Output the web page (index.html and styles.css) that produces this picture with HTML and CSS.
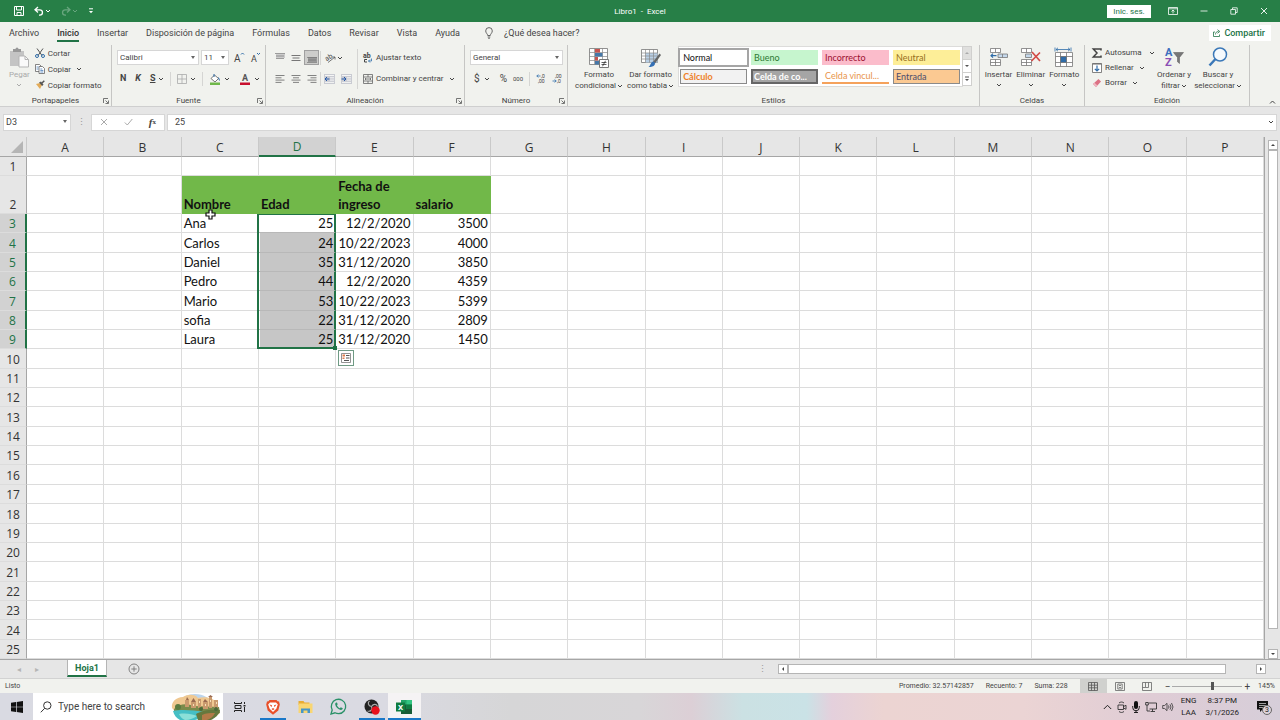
FILE: index.html
```html
<!DOCTYPE html>
<html lang="es">
<head>
  <meta charset="UTF-8">
  <meta name="viewport" content="width=device-width, initial-scale=1.0">
  <title>Libro1 - Excel</title>
  <link rel="stylesheet" href="styles.css">
</head>
<body>
  <!-- Shared icons -->
  <svg class="defs" width="0" height="0">
    <symbol id="chev" viewBox="0 0 6 6"><path d="M1 2l2 2 2-2" fill="none" stroke="currentColor" stroke-width="1"/></symbol>
    <symbol id="launcher" viewBox="0 0 6 6"><path d="M.5 5V.5H5M2.500 2.500L5 5M5.500 2.500v3h-3" fill="none" stroke="#555" stroke-width=".8"/></symbol>
  </svg>

  <header class="title-bar">
    <div class="quick-access">
      <button aria-label="Guardar"><svg width="10" height="10" viewBox="0 0 10 10" fill="none" stroke="#fff"><path d="M.5.5h9v9h-9z"/><path d="M2.500.5v3.500h5V.5M3 9.500V6.500h4v3" /></svg></button>
      <button aria-label="Deshacer" class="undo"><svg width="10" height="10" viewBox="0 0 10 10" fill="none" stroke="#fff" stroke-width="1.300"><path d="M4 1L1 3.800l3 2.700M1.300 3.800h4.500a2.600 2.600 0 010 5.300H5"/></svg><svg class="chev"><use href="#chev"/></svg></button>
      <button aria-label="Rehacer" class="redo"><svg width="10" height="10" viewBox="0 0 10 10" fill="none" stroke="#fff" stroke-width="1.300"><path d="M6 1l3 2.800-3 2.700M8.700 3.800H4.200a2.600 2.600 0 000 5.300H5"/></svg><svg class="chev"><use href="#chev"/></svg></button>
      <button aria-label="Personalizar"><svg width="6" height="6" viewBox="0 0 6 6"><path d="M1 .8h4" stroke="#fff"/><path d="M1 3h4L3 5.200z" fill="#fff"/></svg></button>
    </div>
    <div class="title">Libro1&nbsp; -&nbsp; Excel</div>
    <div class="window-controls">
      <button class="sign-in">Inic. ses.</button>
      <button aria-label="Cinta"><svg width="10" height="8" viewBox="0 0 10 8" fill="none" stroke="#fff" stroke-width=".8"><path d="M.5.5h9v7h-9zM.5 1.800h9M5 6.500V3M3.500 4.500L5 3l1.500 1.500"/></svg></button>
      <button aria-label="Minimizar"><svg width="8" height="8" viewBox="0 0 8 8" stroke="#fff" stroke-width=".8"><path d="M.5 4h7"/></svg></button>
      <button aria-label="Restaurar"><svg width="8" height="8" viewBox="0 0 8 8" fill="none" stroke="#fff" stroke-width=".8"><path d="M.8 2.500h4.700v4.700H.8zM2.500 2.500V.8h4.700v4.700H5.500"/></svg></button>
      <button aria-label="Cerrar"><svg width="8" height="8" viewBox="0 0 8 8" stroke="#fff" stroke-width=".9"><path d="M1 1l6 6M7 1L1 7"/></svg></button>
    </div>
  </header>

  <nav class="tabs">
    <a href="#">Archivo</a>
    <a href="#" class="active">Inicio</a>
    <a href="#">Insertar</a>
    <a href="#">Disposición de página</a>
    <a href="#">Fórmulas</a>
    <a href="#">Datos</a>
    <a href="#">Revisar</a>
    <a href="#">Vista</a>
    <a href="#">Ayuda</a>
    <a href="#" class="tell-me"><svg width="8" height="12" viewBox="0 0 8 12" fill="none" stroke="#555" stroke-width=".9"><path d="M2.700 8.500C2.700 7 .7 6 .7 3.900a3.300 3.300 0 016.600 0C7.300 6 5.300 7 5.300 8.500zM2.700 10h2.600M3.200 11.300h1.600"/></svg>¿Qué desea hacer?</a>
    <button class="share"><svg width="8" height="8" viewBox="0 0 8 8" fill="none" stroke="#217346" stroke-width=".8"><path d="M2 3H.5v4.500h6V5.500M2.500 5.500c0-2 1-3 3-3M4.500.7l2.300 1.800-2.300 1.800"/></svg>Compartir</button>
  </nav>

  <section class="ribbon">
    <div class="group clipboard">
      <div class="group-body">
        <button class="big disabled">
          <svg width="20" height="22" viewBox="0 0 20 22"><path d="M1 4h14v15H1z" fill="#c4c4c4"/><path d="M4 4V2h2.500a1.500 1.500 0 013 0H12v3H4z" fill="#989898"/><path d="M10 9h6l3.500 3.500V20H10z" fill="#fafafa" stroke="#b5b5b5"/><path d="M16 9v3.500h3.500" fill="none" stroke="#b5b5b5"/></svg>
          <span>Pegar</span><svg class="chev"><use href="#chev"/></svg>
        </button>
        <div class="stack">
          <button class="small"><svg width="10" height="10" viewBox="0 0 10 10" fill="none"><path d="M2 .5l5 7M8 .5l-5 7" stroke="#555"/><circle cx="2" cy="8" r="1.500" stroke="#2f6ca8"/><circle cx="8" cy="8" r="1.500" stroke="#2f6ca8"/></svg>Cortar</button>
          <button class="small"><svg width="10" height="10" viewBox="0 0 10 10" fill="#fff" stroke="#666" stroke-width=".8"><path d="M.5.5h4l1.500 1.500v5.500H.5z"/><path d="M4 2.500h3.500l2 2v5H4z"/><path d="M5.300 5h2M5.300 6.500h3M5.300 8h3M1.500 3h2M1.500 5h2" stroke="#4a7ebb"/></svg>Copiar<svg class="chev"><use href="#chev"/></svg></button>
          <button class="small"><svg width="10" height="10" viewBox="0 0 10 10"><path d="M1 4l4-1 2 2-2 4z" fill="#e3ab58"/><path d="M4 2.500l2-1 2.500 3-1.300 1.600z" fill="#555"/><path d="M7 3l2.300-2.300" stroke="#555" stroke-width="1.500"/></svg>Copiar formato</button>
        </div>
      </div>
      <div class="group-label">Portapapeles</div>
      <svg class="launcher"><use href="#launcher"/></svg>
    </div>

    <div class="group font">
      <div class="group-body rows">
        <div class="row">
          <div class="combo font-name"><select aria-label="Fuente"><option>Calibri</option></select></div>
          <div class="combo font-size"><select aria-label="Tamaño"><option>11</option></select></div>
          <button aria-label="Aumentar"><svg width="11" height="11" viewBox="0 0 11 11"><text x="0" y="10" font-size="10" fill="#444">A</text><path d="M7 2.500L8.500 1 10 2.500" fill="none" stroke="#2f6ca8"/></svg></button>
          <button aria-label="Disminuir"><svg width="11" height="11" viewBox="0 0 11 11"><text x="1" y="10" font-size="9" fill="#444">A</text><path d="M7 1l1.500 1.500L10 1" fill="none" stroke="#2f6ca8"/></svg></button>
        </div>
        <div class="row styles">
          <button><b>N</b></button>
          <button><b><i>K</i></b></button>
          <button><b><u>S</u></b><svg class="chev"><use href="#chev"/></svg></button>
          <span class="rule"></span>
          <button aria-label="Bordes"><svg width="10" height="10" viewBox="0 0 10 10" fill="none" stroke="#aaa" stroke-width=".8"><path d="M.5.5h9v9h-9zM5 .5v9M.5 5h9"/></svg><svg class="chev"><use href="#chev"/></svg></button>
          <span class="rule"></span>
          <button aria-label="Relleno"><svg width="12" height="12" viewBox="0 0 12 12"><path d="M2 5.500L5.500 2l4 3.500L6 9z" fill="#fff" stroke="#555" stroke-width=".8"/><path d="M5 1v3M9.500 4.500l1 3" stroke="#2f6ca8" fill="none"/><path d="M1 9.500h10V12H1z" fill="#70b84a"/></svg><svg class="chev"><use href="#chev"/></svg></button>
          <button aria-label="Color de fuente"><svg width="12" height="12" viewBox="0 0 12 12"><text x="3" y="8" font-size="9" font-weight="bold" fill="#555">A</text><path d="M1 9.500h10V12H1z" fill="#c8102e"/></svg><svg class="chev"><use href="#chev"/></svg></button>
        </div>
      </div>
      <div class="group-label">Fuente</div>
      <svg class="launcher"><use href="#launcher"/></svg>
    </div>

    <div class="group align">
      <div class="group-body">
        <div class="rows">
          <div class="row">
            <button aria-label="Superior"><svg width="10" height="10" viewBox="0 0 10 10"><path d="M1 1h9v4H1z" fill="#ccc"/><path d="M0 .5h10M1 3h8M1 5.500h8" stroke="#777" stroke-width=".7"/></svg></button>
            <button aria-label="Medio"><svg width="10" height="10" viewBox="0 0 10 10" stroke="#777"><path d="M.5 2.500h9M1.500 5h7M.5 7.500h9"/></svg></button>
            <button aria-label="Inferior" class="on"><svg width="10" height="10" viewBox="0 0 10 10"><path d="M1 4h9v5H1z" fill="#999"/><path d="M0 4.500h10M1 7h8M0 9.500h10" stroke="#777" stroke-width=".7"/></svg></button>
            <span class="rule"></span>
            <button aria-label="Orientación"><svg width="12" height="12" viewBox="0 0 12 12"><text x="0" y="8" font-size="7" fill="#444" transform="rotate(-30 3 6)">ab</text><path d="M3 10.500L10 5M7.500 5H10v2.500" stroke="#555" fill="none" stroke-width=".8"/></svg><svg class="chev"><use href="#chev"/></svg></button>
          </div>
          <div class="row">
            <button aria-label="Izquierda"><svg width="10" height="10" viewBox="0 0 10 10" stroke="#666" stroke-width=".8"><path d="M.5 1.500h9M.5 3.800h6M.5 6.100h9M.5 8.400h6"/></svg></button>
            <button aria-label="Centro"><svg width="10" height="10" viewBox="0 0 10 10" stroke="#666" stroke-width=".8"><path d="M.5 1.500h9M2 3.800h6M.5 6.100h9M2 8.400h6"/></svg></button>
            <button aria-label="Derecha"><svg width="10" height="10" viewBox="0 0 10 10" stroke="#666" stroke-width=".8"><path d="M.5 1.500h9M3.500 3.800h6M.5 6.100h9M3.500 8.400h6"/></svg></button>
            <span class="rule"></span>
            <button aria-label="Menos sangría"><svg width="11" height="10" viewBox="0 0 11 10"><path d="M0 0h11v10H0z" fill="#c9cbd2"/><path d="M1 1.500h9M6 3.800h4M6 6.100h4M1 8.400h9" stroke="#f5f5f5"/><path d="M5.500 5H1.500M3 3L1 5l2 2" stroke="#2458a8" fill="none"/></svg></button>
            <button aria-label="Más sangría"><svg width="11" height="10" viewBox="0 0 11 10"><path d="M0 0h11v10H0z" fill="#c9cbd2"/><path d="M1 1.500h9M6 3.800h4M6 6.100h4M1 8.400h9" stroke="#f5f5f5"/><path d="M.5 5h4M3 3l2 2-2 2" stroke="#2458a8" fill="none"/></svg></button>
          </div>
        </div>
        <span class="rule tall"></span>
        <div class="rows">
          <button class="small"><svg width="10" height="11" viewBox="0 0 10 11"><text x="0" y="6" font-size="7" font-weight="bold" fill="#444">ab</text><path d="M4 7.500H1.500V10H4" stroke="#444" fill="none"/><path d="M8.500 6.500v2.500H5.500M7 7.500L5.500 9 7 10.500" stroke="#2f6ca8" fill="none" stroke-width=".8"/></svg>Ajustar texto</button>
          <button class="small"><svg width="10" height="10" viewBox="0 0 10 10" fill="none" stroke="#666" stroke-width=".8"><path d="M.5.5h9v9h-9zM.5 3h9M.5 7h9M5 .5V3M5 7v2.500"/><path d="M2 5h6M3 4L2 5l1 1M7 4l1 1-1 1"/></svg>Combinar y centrar<svg class="chev"><use href="#chev"/></svg></button>
        </div>
      </div>
      <div class="group-label">Alineación</div>
      <svg class="launcher"><use href="#launcher"/></svg>
    </div>

    <div class="group number">
      <div class="group-body rows">
        <div class="row"><div class="combo number-format"><select aria-label="Formato de número"><option>General</option></select></div></div>
        <div class="row">
          <button class="sign">$<svg class="chev"><use href="#chev"/></svg></button>
          <button class="sign">%</button>
          <button class="zeros">000</button>
          <span class="rule"></span>
          <button aria-label="Aumentar decimales"><svg width="10" height="11" viewBox="0 0 10 11"><text x="5" y="5" font-size="5" fill="#444">,0</text><text x="2" y="10" font-size="5" fill="#444">,00</text><path d="M4.500 3H.8M2.300 1.500L.8 3l1.500 1.500" stroke="#2f6ca8" fill="none" stroke-width=".8"/></svg></button>
          <button aria-label="Disminuir decimales"><svg width="10" height="11" viewBox="0 0 10 11"><text x="3" y="5" font-size="5" fill="#444">,00</text><text x="5" y="10" font-size="5" fill="#444">,0</text><path d="M.5 8h3.700M2.700 6.500L4.200 8 2.700 9.500" stroke="#2f6ca8" fill="none" stroke-width=".8"/></svg></button>
        </div>
      </div>
      <div class="group-label">Número</div>
      <svg class="launcher"><use href="#launcher"/></svg>
    </div>

    <div class="group cell-styles">
      <div class="group-body">
        <button class="big">
          <svg width="20" height="22" viewBox="0 0 20 22"><path d="M.5 1.500h18v16H.5z" fill="#fff" stroke="#777" stroke-width=".8"/><path d="M.5 5.500h18M.5 9.500h18M.5 13.500h18M5.500 1.500v16M13.500 1.500v16" stroke="#888" stroke-width=".7"/><path d="M6 2h5v3.500H6zM6 10h3v3.500H6z" fill="#c75450"/><path d="M6 6h7.500v3.500H6zM6 14h5v3.500H6z" fill="#4678a8"/><path d="M10.500 12.500h9v8h-9z" fill="#fff" stroke="#777"/><path d="M12.500 15.500h5M12.500 17.500h5M16.500 13.800l-3 5.500" stroke="#333" stroke-width=".8"/></svg>
          <span>Formato</span><span>condicional<svg class="chev"><use href="#chev"/></svg></span>
        </button>
        <button class="big">
          <svg width="20" height="22" viewBox="0 0 20 22"><path d="M.5 2.500h16v13H.5z" fill="#fff" stroke="#777" stroke-width=".8"/><path d="M4.500 6h12v9.500h-12z" fill="#b9d0e6"/><path d="M.5 6h16M.5 9h16M.5 12h16M4.500 2.500v13M8.500 2.500v13M12.500 2.500v13" stroke="#888" stroke-width=".7"/><path d="M18.500 6.500L12 15l2 1.500L20 8z" fill="#666"/><path d="M12 14.500c2 .5 2.500 2 1.500 3.500s-3 2-6 2c2-1 1.500-4 4.500-5.500z" fill="#3470b5"/></svg>
          <span>Dar formato</span><span>como tabla<svg class="chev"><use href="#chev"/></svg></span>
        </button>
        <div class="gallery">
          <button class="normal">Normal</button>
          <button class="good">Bueno</button>
          <button class="bad">Incorrecto</button>
          <button class="neutral">Neutral</button>
          <button class="calc">Cálculo</button>
          <button class="check">Celda de co...</button>
          <button class="linked">Celda vincul...</button>
          <button class="input">Entrada</button>
        </div>
        <div class="gallery-scroll">
          <button class="off" aria-label="Arriba"><svg width="6" height="6" viewBox="0 0 6 6"><path d="M1 4h4L3 2z" fill="#aaa"/></svg></button>
          <button aria-label="Abajo"><svg width="6" height="6" viewBox="0 0 6 6"><path d="M1 2h4L3 4z" fill="#555"/></svg></button>
          <button aria-label="Más"><svg width="6" height="6" viewBox="0 0 6 6"><path d="M1 1h4" stroke="#555"/><path d="M1 3h4L3 5z" fill="#555"/></svg></button>
        </div>
      </div>
      <div class="group-label">Estilos</div>
    </div>

    <div class="group cells">
      <div class="group-body">
        <button class="big">
          <svg width="20" height="22" viewBox="0 0 20 22" fill="#fff" stroke="#777" stroke-width=".8"><path d="M1.500 1.500h10v4h-10zM6.500 1.500v4M1.500 12.500h10v6h-10zM6.500 12.500v6M1.500 15.500h10"/><path d="M9 7h9.500v3.500H9zM13.500 7v3.500" fill="#c5d9ec"/><path d="M7.500 8.700H2M4 6.700l-2 2 2 2" stroke="#2f6ca8" stroke-width="1.200" fill="none"/></svg>
          <span>Insertar</span><svg class="chev"><use href="#chev"/></svg>
        </button>
        <button class="big">
          <svg width="20" height="22" viewBox="0 0 20 22" fill="#fff" stroke="#777" stroke-width=".8"><path d="M.5 1.500h10v4h-10zM5.500 1.500v4M.5 12.500h10v6h-10zM5.500 12.500v6M.5 15.500h10"/><path d="M4.500 7h6v3.500h-6z" fill="#c5d9ec"/><path d="M11 5l8 9M19 5.500L10.500 14" stroke="#d24b47" stroke-width="1.700"/></svg>
          <span>Eliminar</span><svg class="chev"><use href="#chev"/></svg>
        </button>
        <button class="big">
          <svg width="20" height="22" viewBox="0 0 20 22" fill="#fff" stroke="#777" stroke-width=".8"><path d="M1.500 5.500h17v14h-17zM6.500 5.500v14M12.500 5.500v14M1.500 9.500h17M1.500 15.500h17"/><path d="M6.500 9.500h6v6h-6z" fill="#2f6ca8"/><path d="M2 2.500h14M4 .8L2 2.500l2 1.700M14 .8l2 1.700-2 1.700M1 .5v4M17 .5v4" stroke="#2f6ca8" fill="none"/></svg>
          <span>Formato</span><svg class="chev"><use href="#chev"/></svg>
        </button>
      </div>
      <div class="group-label">Celdas</div>
    </div>

    <div class="group editing">
      <div class="group-body">
        <div class="stack">
          <button class="small"><svg width="10" height="10" viewBox="0 0 10 10"><path d="M9 2.500V1H1.300L5 5 1.300 9H9V7.500" fill="none" stroke="#444" stroke-width="1.500"/></svg>Autosuma<svg class="chev last"><use href="#chev"/></svg></button>
          <button class="small"><svg width="10" height="10" viewBox="0 0 10 10"><path d="M.5.5h9v9h-9z" fill="#fff" stroke="#666" stroke-width=".8"/><path d="M.5 1h9" stroke="#666"/><path d="M5 2.500V8M2.800 5.800L5 8l2.200-2.200" fill="none" stroke="#2f6ca8" stroke-width="1.200"/></svg>Rellenar<svg class="chev"><use href="#chev"/></svg></button>
          <button class="small"><svg width="10" height="10" viewBox="0 0 10 10"><path d="M1 6l5.500-5L9 3.500 4 9z" fill="#dc7285"/><path d="M1 6l1.500-1.300L5.500 7.500 4 9z" fill="#efb6c0"/></svg>Borrar<svg class="chev"><use href="#chev"/></svg></button>
        </div>
        <button class="big">
          <svg width="20" height="22" viewBox="0 0 20 22"><text x="1" y="9" font-size="11" font-weight="bold" fill="#3c6fbe">A</text><text x="1" y="19" font-size="11" font-weight="bold" fill="#8c4fb4">Z</text><path d="M9.500 5.500h10l-4 5v6l-2-1.700v-4.300z" fill="#777" stroke="#555" stroke-width=".5"/></svg>
          <span>Ordenar y</span><span>filtrar<svg class="chev"><use href="#chev"/></svg></span>
        </button>
        <button class="big">
          <svg width="20" height="22" viewBox="0 0 20 22" fill="none" stroke="#3b78b8"><circle cx="12" cy="7.500" r="6.500" fill="#f6fafd" stroke-width="1.500"/><path d="M7.500 12L1.500 18.500" stroke-width="2.500"/></svg>
          <span>Buscar y</span><span>seleccionar<svg class="chev"><use href="#chev"/></svg></span>
        </button>
      </div>
      <div class="group-label">Edición</div>
    </div>
    <button class="collapse" aria-label="Contraer"><svg width="7" height="6" viewBox="0 0 7 6"><path d="M1 4.500L3.500 2 6 4.500" fill="none" stroke="#444"/></svg></button>
  </section>

  <div class="formula-bar">
    <div class="combo name-box"><input type="text" aria-label="Cuadro de nombres" value="D3"></div>
    <span class="grip">⋮</span>
    <div class="fx">
      <button aria-label="Cancelar"><svg width="8" height="8" viewBox="0 0 8 8" stroke="#aaa"><path d="M1 1l6 6M7 1L1 7"/></svg></button>
      <button aria-label="Introducir"><svg width="9" height="8" viewBox="0 0 9 8" fill="none" stroke="#aaa"><path d="M.8 4.500L3.300 7l5-6"/></svg></button>
      <button class="fx-btn"><i>f</i><small>x</small></button>
    </div>
    <div class="formula"><input type="text" aria-label="Barra de fórmulas" value="25"><svg class="chev"><use href="#chev"/></svg></div>
  </div>

  <main class="workbook">
    <div class="grid-area">
      <table class="sheet" id="sheet"></table>
    </div>
    <div class="vscroll">
      <button aria-label="Arriba"><svg width="6" height="6" viewBox="0 0 6 6"><path d="M1 4h4L3 2z" fill="#444"/></svg></button>
      <div class="thumb"></div>
      <button aria-label="Abajo"><svg width="6" height="6" viewBox="0 0 6 6"><path d="M1 2h4L3 4z" fill="#444"/></svg></button>
    </div>
  </main>

  <div class="sheet-bar">
    <div class="nav-arrows"><button>◂</button><button>▸</button></div>
    <button class="sheet-tab">Hoja1</button>
    <button class="add" aria-label="Hoja nueva"><svg width="12" height="12" viewBox="0 0 12 12" fill="none" stroke="#777" stroke-width=".9"><circle cx="6" cy="6" r="5"/><path d="M6 3.300v5.400M3.300 6h5.400"/></svg></button>
    <span class="grip">⋮</span>
    <div class="hscroll">
      <button aria-label="Izquierda"><svg width="6" height="6" viewBox="0 0 6 6"><path d="M4 1v4L2 3z" fill="#444"/></svg></button>
      <div class="thumb"></div>
      <button aria-label="Derecha"><svg width="6" height="6" viewBox="0 0 6 6"><path d="M2 1v4l2-2z" fill="#444"/></svg></button>
    </div>
  </div>

  <footer class="status-bar">
    <span class="ready">Listo</span>
    <span>Promedio: 32.57142857</span>
    <span>Recuento: 7</span>
    <span>Suma: 228</span>
    <div class="views">
      <button class="on" aria-label="Normal"><svg width="10" height="9" viewBox="0 0 10 9" fill="none" stroke="#555" stroke-width=".8"><path d="M.5.5h9v8h-9zM.5 3.200h9M.5 5.800h9M3.500.5v8M6.500.5v8"/></svg></button>
      <button aria-label="Diseño de página"><svg width="10" height="9" viewBox="0 0 10 9" fill="none" stroke="#666" stroke-width=".8"><path d="M.5.5h9v8h-9zM2.800 2h4.400v5H2.800zM4 3.500h2M4 5.500h2"/></svg></button>
      <button aria-label="Saltos de página"><svg width="10" height="9" viewBox="0 0 10 9" fill="none" stroke="#666" stroke-width=".8"><path d="M.5.5h9v8h-9zM3.500.5v5H.5M6.500.5v5h-3"/></svg></button>
    </div>
    <div class="zoom">
      <button>−</button>
      <input type="range" aria-label="Zoom" min="0" max="100" value="57">
      <button>+</button>
      <span>145%</span>
    </div>
  </footer>

  <div class="taskbar">
    <button class="start" aria-label="Start"><svg width="12" height="12" viewBox="0 0 12 12"><path d="M0 1.700l5-.7v4.700H0zM5.700.9L12 0v5.700H5.700zM0 6.300h5V11l-5-.7zM5.700 6.300H12V12l-6.300-.9z" fill="#111"/></svg></button>
    <div class="search">
      <svg width="12" height="12" viewBox="0 0 12 12" fill="none" stroke="#333"><circle cx="7.300" cy="4.500" r="3.700"/><path d="M4.700 7.300L.8 11.300"/></svg>
      <input type="text" aria-label="Search" placeholder="Type here to search">
      <svg class="highlight" width="50" height="26" viewBox="0 0 50 26">
        <ellipse cx="24" cy="10" rx="16" ry="10" fill="#bcd5ec"/>
        <path d="M1 14C0 8 5 3 12 3c5-3 12-3 15 1 8-2 18 0 20 8l2 7-6 5H10z" fill="#efc891"/>
        <path d="M3 15c5-5 12-6 20-3l25 1 1 6-16 3-30-3z" fill="#7a8b4b"/>
        <path d="M14 6h4v7h-4zM20 8h5v6h-5zM27 5h3v9h-3zM32 8h5v7h-5zM38 3h3v11h-3zM43 6h4v9h-4z" fill="#c99a6e"/>
        <path d="M15 6l1-3 2 3zM20 8l2.500-4L25 8zM32 8l2-3 3 3zM37 3l2.500-2L42 3z" fill="#9a6a50"/>
        <path d="M28 7h1v2h-1zM34 10h1v2h-1zM39 6h1v2h-1zM45 8h1v2h-1zM22 10h1v2h-1z" fill="#f5dfb8"/>
        <path d="M2 17c8-2 20-1 32 1-1 4-5 7-10 8H9c-4-2-6-5-7-9z" fill="#45bfc5"/>
        <path d="M8 20c7-1 13 0 18 2-3 2-7 4-12 4-3-1-5-4-6-6z" fill="#8be0d8"/>
        <path d="M25 20c6-4 16-5 24-4-1 5-5 8-9 10H27z" fill="#65783d"/>
        <path d="M31 21c4-2 9-2 13-2-2 4-5 6-8 7h-5z" fill="#b27a48"/>
        <circle cx="7" cy="13" r="3" fill="#5a7b3f"/><circle cx="30" cy="15" r="2" fill="#4a6a39"/><circle cx="45" cy="15" r="2" fill="#4a6a39"/>
      </svg>
    </div>
    <div class="apps">
      <button aria-label="Task view"><svg width="12" height="12" viewBox="0 0 12 12" fill="none" stroke="#222"><path d="M.5 1v1.500h7V1M.5 11V9.500h7V11M1 4.500h6v3H1zM10.500 1v2M10.500 6v5"/><path d="M9.500 4h2v1.500h-2z" fill="#222" stroke="none"/></svg></button>
      <button aria-label="Brave" class="open"><svg width="14" height="16" viewBox="0 0 14 16"><path d="M3.500 1h7l1 1.300 1.500.2.800 3-1.500 6L7 15.800 1.700 11.500.2 5.500l.8-3 1.500-.2z" fill="#e8502a"/><path d="M4 3.500h6l1.800 2-1.500 4.300L7 13 3.700 9.800 2.200 5.500z" fill="#fff"/><path d="M3.500 5.500l2.500.8-.5 2zM10.500 5.500L8 6.300l.5 2zM5.500 10L7 9l1.500 1L7 11.300z" fill="#e8502a"/></svg></button>
      <button aria-label="Explorer"><svg width="15" height="14" viewBox="0 0 15 14"><path d="M.5 1h5l1 1.500h5V5H.5z" fill="#e8ac34"/><path d="M.5 3.500h14V13H.5z" fill="#f9d672"/><path d="M3 13V8.500h9V13H9.500v-2.500h-4V13z" fill="#4796c8"/></svg></button>
      <button aria-label="WhatsApp"><svg width="17" height="17" viewBox="0 0 17 17" fill="none" stroke="#2a9168"><path d="M1 16l1.200-4A7.200 7.200 0 118.700 15.700c-1.400 0-2.600-.3-3.700-.9z" stroke-width="1.300"/><path d="M6.400 4.500c-.8.3-1.400 1-1.200 2 .5 2.700 3 5 5.600 5.400 1 .1 1.800-.7 2-1.700l-2-1-1 1C8.500 9.700 7.500 8.700 7 7.300l.7-1-.8-1.800z" fill="#2a9168" stroke="none"/></svg></button>
      <button aria-label="OBS" class="open"><svg width="16" height="16" viewBox="0 0 16 16"><circle cx="7.500" cy="7.500" r="7" fill="#222"/><path d="M7.500 7.500C4 7 3.500 3.500 5.500 2M7.500 7.500c2-3 5.500-2.500 6 .2M7.500 7.500c1.500 3-1 5.500-4 4.500" fill="none" stroke="#aaa" stroke-width="1.200"/><circle cx="11.500" cy="11.500" r="4.200" fill="#e8111c"/></svg></button>
      <button aria-label="Excel" class="open current"><svg width="17" height="16" viewBox="0 0 17 16"><path d="M5 1h11v14H5z" fill="#21a366"/><path d="M10.500 1H16v4.500h-5.500z" fill="#33c481"/><path d="M5 5.500h5.500V10H5zM10.500 10H16v5H5v-5z" fill="#185c37"/><path d="M10.500 5.500H16V10h-5.500z" fill="#107c41"/><path d="M0 3.500h9v9H0z" fill="#107c41"/><text x="2" y="11" font-size="8" font-weight="bold" fill="#fff">X</text></svg></button>
    </div>
    <div class="tray">
      <svg width="9" height="12" viewBox="0 0 9 12"><path d="M.8 8l3.700-3.700L8.200 8" fill="none" stroke="#222"/></svg>
      <svg width="10" height="12" viewBox="0 0 10 12" fill="none" stroke="#333" stroke-width=".9"><path d="M1 4h5.500v4.500H1zM6.500 5.500L9 4.300v4L6.500 7M2 2c1.500-1.300 3.500-1.300 5 0M2 10.500c1.500 1.300 3.500 1.300 5 0"/></svg>
      <svg width="8" height="12" viewBox="0 0 8 12"><rect x="2" y="0" width="4" height="8" rx="2" fill="#111"/><path d="M.7 5v1.500a3.300 3.300 0 006.600 0V5M4 9.500V12M2 11.500h4" fill="none" stroke="#111" stroke-width=".9"/></svg>
      <svg width="12" height="12" viewBox="0 0 12 12" fill="none" stroke="#333" stroke-width=".9"><path d="M4 2h7.500v6H4.500M7.500 8v2.500M5.500 10.500h4.500M.7 1.500h2.600v2.500H.7zM2 4v6h3"/></svg>
      <svg width="12" height="12" viewBox="0 0 12 12" fill="none" stroke="#333" stroke-width=".8"><path d="M.7 4.500h2L5 2.300v7.400L2.700 7.500h-2zM6.500 4.500q1 1.500 0 3M8 3.300q2 2.700 0 5.400M9.500 2q3 4 0 8"/></svg>
      <div class="lang">ENG<br>LAA</div>
      <div class="clock">8:37 PM<br>3/1/2026</div>
      <div class="notices"><svg width="11" height="11" viewBox="0 0 11 11"><path d="M0 0h11v8.500H5.500L3 11V8.500H0z" fill="#111"/><path d="M2 2.500h7M2 4.500h7M2 6.500h4" stroke="#ddd" stroke-width=".7"/></svg><span>3</span></div>
    </div>
  </div>

  <script src="sheet.js"></script>
</body>
</html>
```

FILE: styles.css
```css
* {
  box-sizing: border-box;
}

body {
  margin: 0;
  height: 100vh;
  display: flex;
  flex-direction: column;
  overflow: hidden;
  background-color: #e6e6e6;
  color: #444;
  font-family: Roboto, "Noto Sans", sans-serif;
  font-size: 8px;
  line-height: 11px;
}

button, input, select {
  font: inherit;
  color: inherit;
  border: none;
  background: none;
  padding: 0;
  margin: 0;
  border-radius: 0;
}

button {
  display: flex;
  align-items: center;
  justify-content: center;
  white-space: nowrap;
}

a {
  color: inherit;
  text-decoration: none;
}

svg {
  display: block;
  flex-shrink: 0;
  overflow: visible;
}

.defs {
  position: absolute;
}

.chev {
  width: 6px;
  height: 6px;
}

/* Title bar */
.title-bar {
  display: grid;
  grid-template-columns: 1fr auto 1fr;
  align-items: center;
  height: 22px;
  flex-shrink: 0;
  background-color: #277f47;
  color: #fff;
}

.quick-access {
  display: flex;
  align-items: center;
  gap: 10px;
  padding-left: 14px;
}

.quick-access button {
  gap: 1px;
}

.redo {
  opacity: 0.3;
}

.window-controls {
  display: flex;
  justify-content: flex-end;
  align-items: center;
  gap: 22px;
  padding-right: 12px;
}

.sign-in {
  background-color: #fff;
  color: #217346;
  width: 44px;
  height: 13px;
  margin-right: -5px;
}

/* Tabs */
.tabs {
  display: flex;
  align-items: center;
  gap: 18px;
  height: 22px;
  flex-shrink: 0;
  padding: 0 9px;
  background-color: #f1f2ee;
  font-size: 9px;
}

.tabs a {
  line-height: 14px;
  padding-top: 2px;
  border-bottom: 2px solid transparent;
}

.tabs .active {
  font-weight: 500;
  color: #333;
  border-color: #217346;
}

.tabs .tell-me {
  display: flex;
  align-items: center;
  gap: 11px;
  margin-left: 7px;
}

.share {
  margin-left: auto;
  gap: 3px;
  height: 16px;
  padding: 0 6px 0 4px;
  background-color: #fff;
  color: #217346;
  font-weight: 500;
}

/* Ribbon */
.ribbon {
  display: flex;
  height: 63px;
  flex-shrink: 0;
  background-color: #f1f2ee;
  border-bottom: 1px solid #cfcfcf;
}

.group {
  position: relative;
  display: flex;
  flex-direction: column;
  justify-content: space-between;
  margin: 1px 0 0;
  border-right: 1px solid #c6c6c4;
}

.group-body {
  display: flex;
  align-items: flex-start;
  height: 47px;
}

.group-label {
  text-align: center;
  line-height: 11px;
}

.launcher {
  position: absolute;
  right: 2px;
  bottom: 2px;
  width: 6px;
  height: 6px;
}

.rows {
  display: flex;
  flex-direction: column;
  align-items: flex-start;
  gap: 4px;
}

.rows > * {
  height: 17px;
}

.row {
  display: flex;
  align-items: center;
}

.rule {
  width: 1px;
  height: 14px;
  background-color: #d5d5d3;
}

.rule.tall {
  height: 40px;
}

.big {
  display: flex;
  flex-direction: column;
  justify-content: flex-start;
  flex-shrink: 0;
  padding-top: 2px;
}

.big > .chev {
  margin-top: 2px;
}

.big span {
  display: flex;
  align-items: center;
  gap: 1px;
}

.big.disabled {
  color: #aaa;
}

.stack {
  display: flex;
  flex-direction: column;
  align-items: flex-start;
}

.stack button {
  height: 16px;
}

.small {
  gap: 3px;
}

.small .chev {
  margin-left: 2px;
}

.combo {
  position: relative;
  height: 15px;
  background-color: #fff;
  border: 1px solid #d6d6d6;
}

.combo select, .combo input {
  display: block;
  width: 100%;
  height: 100%;
  padding: 0 2px;
  appearance: none;
}

.combo::after {
  content: "";
  position: absolute;
  right: 3px;
  top: 5px;
  border: 2px solid transparent;
  border-top: 3px solid #666;
  border-bottom: none;
}

.clipboard {
  width: 112px;
}

.clipboard .group-body {
  padding-left: 9px;
  gap: 5px;
}

.font {
  width: 154px;
}

.font .group-body {
  padding: 4px 0 0 5px;
}

.font-name {
  width: 82px;
}

.font-size {
  width: 28px;
  margin-left: 2px;
}

.font .row button {
  margin-left: 5px;
}

.font .styles button {
  margin-left: 0;
  gap: 3px;
}

.styles {
  gap: 9px;
  padding-left: 3px;
  font-size: 9px;
}

.styles .rule {
  margin: 0 -3px;
}

.align {
  width: 199px;
}

.align .group-body {
  padding: 4px 0 0 6px;
  gap: 5px;
}

.align .row {
  gap: 1px;
}

.align .row button {
  width: 15px;
  height: 15px;
  flex-shrink: 0;
}

.align .row button:last-child {
  width: auto;
  margin-left: 3px;
}

.align .on {
  background-color: #cdcdcb;
  outline: 1px solid #a0a0a0;
  outline-offset: -1px;
}

.number {
  width: 103px;
}

.number .group-body {
  padding: 4px 0 0 5px;
}

.number .row {
  gap: 6px;
}

.number-format {
  width: 93px;
}

.sign {
  font-size: 10px;
  gap: 4px;
  padding-left: 4px;
}

.zeros {
  font-size: 6px;
}

.cell-styles {
  flex: 1;
}

.cell-styles .group-body {
  gap: 4px;
  padding-left: 7px;
}

.gallery {
  flex: 1;
  display: grid;
  grid-template-columns: repeat(4, 1fr);
  gap: 4px;
  padding: 3px 2px 2px 1px;
  margin-top: 1px;
  background-color: #fff;
  border: 1px solid #dcdcda;
}

.gallery button {
  justify-content: flex-start;
  height: 15px;
  padding-left: 3px;
  overflow: hidden;
  font-family: Lato, sans-serif;
  font-size: 9px;
}

.normal {
  color: #111;
  outline: 2px solid #a5a5a5;
}

.good {
  background-color: #c6f5ce;
  color: #2d7a33;
}

.bad {
  background-color: #fbbccb;
  color: #9c1030;
}

.neutral {
  background-color: #fdee98;
  color: #98701c;
}

.gallery .calc {
  background-color: #f2f2f2;
  border: 1px solid #8a8a8a;
  color: #ee8027;
  font-weight: bold;
  padding-left: 2px;
}

.gallery .check {
  background-color: #a5a5a5;
  border: 2px solid #666;
  color: #fff;
  font-weight: bold;
  padding-left: 1px;
}

.linked {
  border-bottom: 2px solid #f5a25b;
  color: #e8944a;
}

.gallery .input {
  background-color: #fbc992;
  border: 1px solid #8a8a8a;
  color: #4d4d6d;
  padding-left: 2px;
}

.gallery-scroll {
  display: flex;
  flex-direction: column;
  width: 10px;
  margin: 1px 7px 0 -5px;
}

.gallery-scroll button {
  height: 14px;
  margin-top: -1px;
  background-color: #fff;
  border: 1px solid #d0d0ce;
}

.gallery-scroll button:first-child {
  margin-top: 0;
}

.gallery-scroll .off {
  background-color: #e0e0de;
}

.cells {
  width: 105px;
}

.cells .group-body {
  justify-content: center;
  gap: 4px;
}

.editing {
  width: 165px;
}

.editing .group-body {
  padding-left: 7px;
  gap: 3px;
}

.editing .stack {
  width: 62px;
}

.editing .stack button {
  height: 15px;
}

.editing .last {
  margin-left: 4px;
}

.collapse {
  align-self: flex-end;
  width: 30px;
  height: 9px;
  padding-left: 14px;
}

/* Formula bar */
.formula-bar {
  display: flex;
  align-items: center;
  height: 30px;
  flex-shrink: 0;
  padding: 0 3px;
  font-size: 9px;
}

.formula-bar > div {
  height: 17px;
  background-color: #fff;
  border: 1px solid #d6d6d6;
}

.name-box {
  width: 68px;
}

.grip {
  width: 20px;
  text-align: center;
  color: #999;
  font-size: 9px;
}

.fx {
  display: flex;
  width: 74px;
  justify-content: space-around;
}

.fx-btn {
  font-family: "Liberation Serif", serif;
  font-size: 11px;
  font-weight: bold;
}

.fx-btn small {
  font-size: 7px;
}

.formula-bar .formula {
  flex: 1;
  display: flex;
  align-items: center;
  margin-left: 2px;
  padding: 0 2px 0 7px;
}

.formula input {
  flex: 1;
}

/* Grid */
.workbook {
  flex: 1;
  min-height: 0;
  display: flex;
  border-bottom: 1px solid #a6a6a6;
}

.grid-area {
  flex: 1;
  min-height: 0;
  overflow: hidden;
}

.sheet {
  width: 100%;
  height: 100%;
  table-layout: fixed;
  border-collapse: separate;
  border-spacing: 0;
  background-color: #fff;
  color: #111;
  font-family: Lato, Carlito, sans-serif;
  font-size: 13px;
  line-height: 19px;
}

.sheet .corner-col {
  width: 27px;
}

.sheet tr {
  height: 19px;
}

.sheet thead tr {
  height: 20px;
}

.sheet .tall {
  height: 37px;
}

.sheet th, .sheet td {
  position: relative;
  padding: 0;
  border-right: 1px solid #dcdcdc;
  border-bottom: 1px solid #dcdcdc;
}

.sheet th {
  background-color: #e6e6e6;
  color: #333;
  font-family: "Open Sans", "Noto Sans", sans-serif;
  font-size: 12px;
  font-weight: 400;
  line-height: 17px;
  vertical-align: bottom;
}

.sheet thead th {
  border-right-color: #c9c9c9;
  border-bottom-color: #a6a6a6;
}

.sheet tbody th {
  border-right-color: #a6a6a6;
}

.corner svg {
  margin: 0 3px 3px auto;
}

.sheet thead .picked {
  background-color: #d2d2d2;
  color: #217346;
  border-bottom: 2px solid #217346;
}

.sheet tbody .picked {
  background-color: #d2d2d2;
  color: #217346;
  border-right: 2px solid #217346;
}

.sheet td {
  padding: 0 2px;
  line-height: 17px;
  vertical-align: bottom;
}

.sheet .head {
  background-color: #71b849;
  border-color: #71b849;
  font-weight: bold;
  line-height: 18px;
}

.sheet .num {
  text-align: right;
}

.sheet .range {
  background-color: #c6c6c6;
  border-right: 2px solid #217346;
  border-bottom-color: #b8b8b8;
  box-shadow: inset 1px 0 #fff, -2px 0 #217346;
  padding-right: 1px;
}

.sheet .range-first {
  background-color: #fff;
  box-shadow: inset 0 1px #217346, -2px 0 #217346;
}

.sheet .range-last {
  border-bottom: 2px solid #217346;
  line-height: 15px;
}

.handle {
  position: absolute;
  right: -3px;
  bottom: -3px;
  width: 4px;
  height: 4px;
  background-color: #217346;
  z-index: 1;
}

.quick-analysis {
  position: absolute;
  left: 2px;
  top: 1px;
  width: 16px;
  height: 16px;
  background-color: #fff;
  border: 1px solid #6f9a84;
  z-index: 1;
}

.cursor {
  position: absolute;
  left: 23px;
  bottom: -7px;
  z-index: 1;
}

/* Scroll bars */
.vscroll {
  display: flex;
  flex-direction: column;
  width: 16px;
  padding: 3px 2px 0 3px;
  border-left: 1px solid #a6a6a6;
}

.vscroll .thumb {
  flex: 1;
  margin-bottom: 20px;
  background-color: #fff;
  border: 1px solid #b5b5b5;
}

.vscroll button, .hscroll button {
  width: 10px;
  height: 10px;
  flex-shrink: 0;
  background-color: #fff;
  border: 1px solid #b5b5b5;
}

.sheet-bar {
  display: flex;
  height: 19px;
  flex-shrink: 0;
  padding-right: 14px;
  border-bottom: 1px solid #d2d2d2;
}

.nav-arrows {
  display: flex;
  gap: 14px;
  width: 67px;
  padding-left: 17px;
  color: #b5b5b5;
  font-family: "DejaVu Sans", sans-serif;
}

.sheet-tab {
  width: 40px;
  height: 17px;
  padding-top: 2px;
  background-color: #fff;
  color: #217346;
  font-size: 9px;
  font-weight: bold;
  border: 1px solid #b5b5b5;
  border-top: none;
  border-bottom: 2px solid #217346;
}

.add {
  margin-left: 21px;
}

.sheet-bar .grip {
  margin-left: auto;
  line-height: 19px;
}

.hscroll {
  display: flex;
  align-items: center;
  width: 39%;
  padding-left: 6px;
}

.hscroll .thumb {
  flex: 1;
  height: 10px;
  margin-right: 30px;
  background-color: #fff;
  border: 1px solid #b5b5b5;
}

/* Status bar */
.status-bar {
  display: flex;
  align-items: center;
  gap: 12px;
  height: 14px;
  flex-shrink: 0;
  padding: 0 5px;
  background-color: #f1f2ee;
  font-size: 7px;
}

.ready {
  margin-right: auto;
}

.views {
  display: flex;
  align-self: stretch;
}

.views button {
  width: 27px;
}

.views .on {
  background-color: #d0d1ce;
}

.zoom {
  display: flex;
  align-items: center;
  gap: 2px;
  margin-left: -8px;
}

.zoom button {
  font-size: 10px;
}

.zoom span {
  margin-left: 6px;
}

.zoom input {
  width: 70px;
  height: 8px;
  appearance: none;
  background: linear-gradient(#aaa, #aaa) center / 100% 1px no-repeat;
}

.zoom input::-webkit-slider-thumb {
  appearance: none;
  width: 3px;
  height: 8px;
  background-color: #555;
}

/* Taskbar */
.taskbar {
  display: flex;
  height: 27px;
  flex-shrink: 0;
  background: linear-gradient(90deg, #d9dae2 0%, #dadae2 30%, #d6d6d7 40%, #d8d6d8 50%, #dccfd6 54%, #cbe1e3 58%, #cae2e6 63%, #e4d0dc 65%, #ecd4d2 69%, #ebd4d4 80%, #dfccd5 90%, #d6ced9 100%);
  color: #222;
}

.start {
  width: 33px;
}

.search {
  display: flex;
  align-items: center;
  width: 190px;
  background-color: #fff;
  padding: 0 2px 0 7px;
}

.search input {
  flex: 1;
  min-width: 0;
  margin-left: 6px;
  font-size: 10px;
}

.search input::placeholder {
  color: #444;
}

.apps {
  display: flex;
}

.apps button {
  width: 33px;
}

.apps .open {
  background: linear-gradient(#1a78c8, #1a78c8) bottom / 26px 2px no-repeat;
}

.apps .current {
  background: linear-gradient(#1a78c8, #1a78c8) bottom / 100% 2px no-repeat #f5f3f4;
}

.tray {
  display: flex;
  align-items: center;
  gap: 5px;
  margin-left: auto;
  padding-right: 12px;
}

.lang, .clock {
  font-size: 8px;
  line-height: 12px;
  text-align: center;
}

.lang {
  margin-left: 2px;
}

.clock {
  margin-left: 4px;
}

.notices {
  position: relative;
  margin-left: 13px;
}

.notices span {
  position: absolute;
  left: 5px;
  top: 4px;
  width: 10px;
  height: 10px;
  border: 1px solid #666;
  border-radius: 50%;
  background-color: #ddd3da;
  font-size: 7px;
  line-height: 8px;
  text-align: center;
}
```

FILE: sheet.js
```javascript
var columns = 'ABCDEFGHIJKLMNOP'.split('');

var headers = { C: 'Nombre', D: 'Edad', E: 'Fecha de ingreso', F: 'salario' };

// dates stored as text stay on the left
var people = [
  ['Ana', 25, '12/2/2020', 3500],
  ['Carlos', 24, '10/22/2023', 4000],
  ['Daniel', 35, '31/12/2020', 3850],
  ['Pedro', 44, '12/2/2020', 4359],
  ['Mario', 53, '10/22/2023', 5399],
  ['sofia', 22, '31/12/2020', 2809],
  ['Laura', 25, '31/12/2020', 1450]
];

var cursor = '<svg class="cursor" width="11" height="11" viewBox="0 0 11 11"><path d="M4 1h3v3h3v3H7v3H4V7H1V4h3z" fill="#fff" stroke="#111" stroke-width="1.200"/></svg>';

var quickAnalysis = '<button class="quick-analysis" aria-label="Análisis rápido"><svg width="10" height="10" viewBox="0 0 10 10"><path d="M.5.5h9v9h-9z" fill="#fff" stroke="#777" stroke-width=".8"/><path d="M1.500 1.500H4v2H1.500zM1.500 4.500h2V6h-2z" fill="#e07a4b"/><path d="M5 2.500h3.500M5 5h3.500M3 7.500h5" stroke="#555"/></svg></button>';

function cell(col, row) {
  var person = people[row - 3];
  if (row === 2 && headers[col]) {
    return '<td class="head">' + headers[col] + (col === 'C' ? cursor : '') + '</td>';
  }
  if (row === 10 && col === 'E') {
    return '<td>' + quickAnalysis + '</td>';
  }
  if (!person || !headers[col]) {
    return '<td></td>';
  }
  var value = person['CDEF'.indexOf(col)];
  var classes = [];
  if (col === 'D' || col === 'F' || (col === 'E' && value.indexOf('31') !== 0)) classes.push('num');
  if (col === 'D') classes.push('range');
  if (col === 'D' && row === 3) classes.push('range-first');
  if (col === 'D' && row === 9) {
    classes.push('range-last');
    value += '<span class="handle"></span>';
  }
  return '<td class="' + classes.join(' ') + '">' + value + '</td>';
}

var html = '<colgroup><col class="corner-col"></colgroup><thead><tr><th class="corner"><svg width="12" height="12" viewBox="0 0 12 12"><path d="M12 0v12H0z" fill="#b5b5b5"/></svg></th>';
columns.forEach(function (col) {
  html += '<th' + (col === 'D' ? ' class="picked"' : '') + '>' + col + '</th>';
});
html += '</tr></thead><tbody>';

for (var row = 1; row <= 25; row++) {
  html += '<tr' + (row === 2 ? ' class="tall"' : '') + '>';
  html += '<th' + (row >= 3 && row <= 9 ? ' class="picked"' : '') + '>' + row + '</th>';
  columns.forEach(function (col) {
    html += cell(col, row);
  });
  html += '</tr>';
}

document.getElementById('sheet').innerHTML = html + '</tbody>';
```
